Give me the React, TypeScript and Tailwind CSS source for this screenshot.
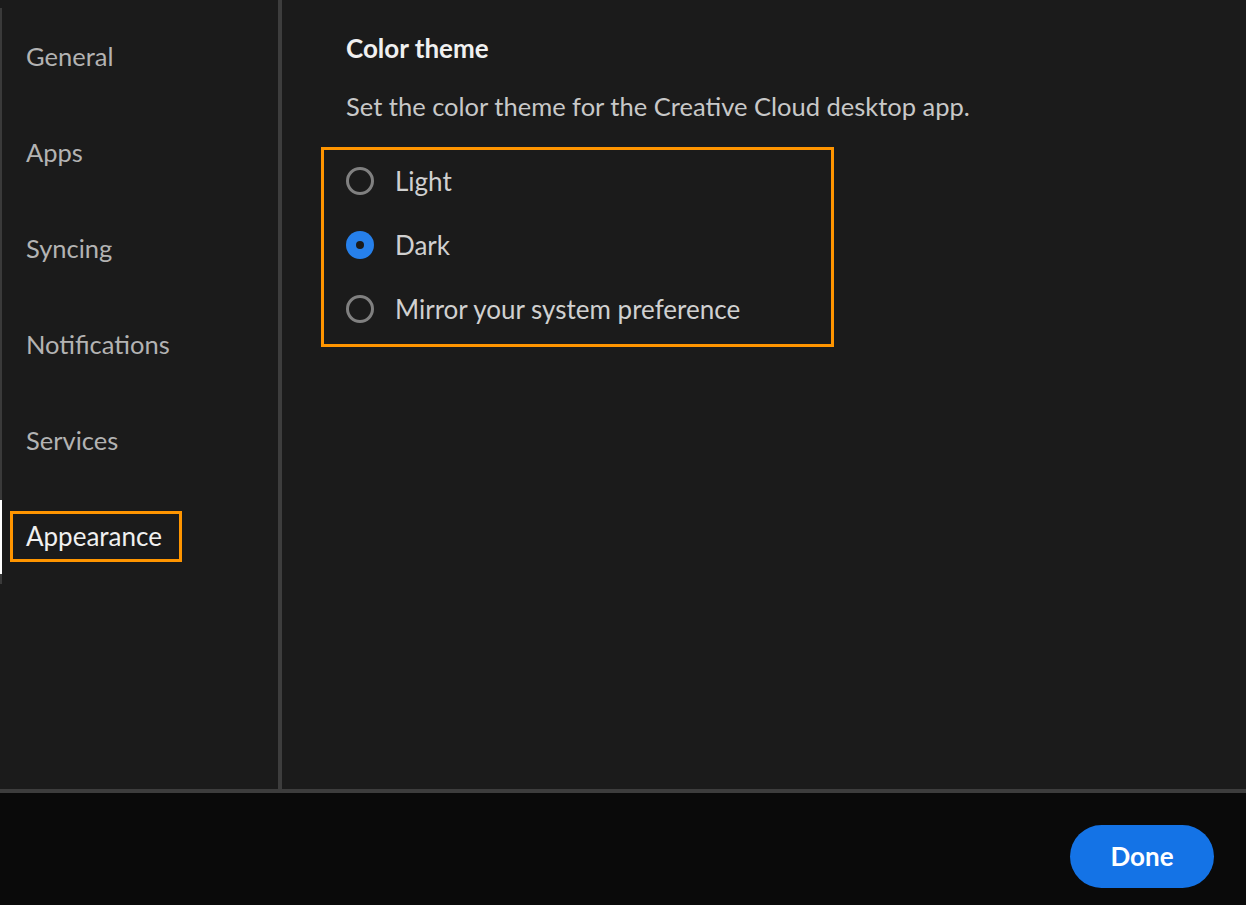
const navItems = ['General', 'Apps', 'Syncing', 'Notifications', 'Services', 'Appearance']

const themes = [
  { id: 'light', label: 'Light' },
  { id: 'dark', label: 'Dark' },
  { id: 'system', label: 'Mirror your system preference' },
]

function Radio({ checked }: { checked: boolean }) {
  if (checked) {
    return (
      <span className="flex h-[28px] w-[28px] shrink-0 items-center justify-center rounded-full bg-[#2680eb]">
        <span className="h-[8px] w-[8px] rounded-full bg-[#1b1b1b]" />
      </span>
    )
  }
  return <span className="h-[28px] w-[28px] shrink-0 rounded-full border-[3px] border-[#808080]" />
}

export default function App() {
  const selected = 'dark'
  const active = 'Appearance'

  return (
    <div
      className="flex h-[905px] w-[1246px] flex-col overflow-hidden bg-[#1b1b1b]"
      style={{ fontFamily: 'Lato, "Open Sans", sans-serif' }}
    >
      <div className="flex h-[789px]">
        {/* sidebar */}
        <div className="w-[278px] pt-[8px]">
          <div className="border-l-2 border-[#3a3a3a]">
            {navItems.map((item) => {
              const isActive = item === active
              return (
                <div key={item} className="relative flex h-[96px] items-center">
                  {isActive && (
                    <span className="absolute -left-[2px] top-[12px] h-[74px] w-[2px] bg-white" />
                  )}
                  {isActive ? (
                    <span className="ml-[8px] h-[51px] w-[172px] border-[3px] border-[#ff9500] pl-[13px] text-[26px] leading-[44px] text-[#f0f0f0]">
                      {item}
                    </span>
                  ) : (
                    <span className="ml-[24px] text-[25.5px] text-[#b3b3b3]">{item}</span>
                  )}
                </div>
              )
            })}
          </div>
        </div>
        <div className="w-[4px] bg-[#3d3d3d]" />
        {/* main */}
        <div className="flex-1 pl-[39px] pt-[31px]">
          <div className="pl-[25px]">
            <h2 className="text-[26px] font-bold leading-[34px] text-[#f0f0f0]">Color theme</h2>
            <p className="mt-[25px] text-[25.5px] leading-[32px] text-[#c8c8c8]">
              Set the color theme for the Creative Cloud desktop app.
            </p>
          </div>
          <div className="mt-[25px] flex w-[513px] flex-col gap-[8px] border-[3px] border-[#ff9500] pb-[7px] pl-[22px] pt-[3px]">
            {themes.map((t) => (
              <div key={t.id} className="flex h-[56px] items-center gap-[21px]">
                <Radio checked={t.id === selected} />
                <span className="text-[26px] text-[#d0d0d0]">{t.label}</span>
              </div>
            ))}
          </div>
        </div>
      </div>
      <div className="h-[4px] bg-[#3d3d3d]" />
      <div className="flex flex-1 items-center justify-end bg-[#0a0a0a] pr-[32px] pt-[14px]">
        <button className="h-[63px] w-[144px] rounded-full bg-[#1473e6] text-[26px] font-bold text-white">
          Done
        </button>
      </div>
    </div>
  )
}
